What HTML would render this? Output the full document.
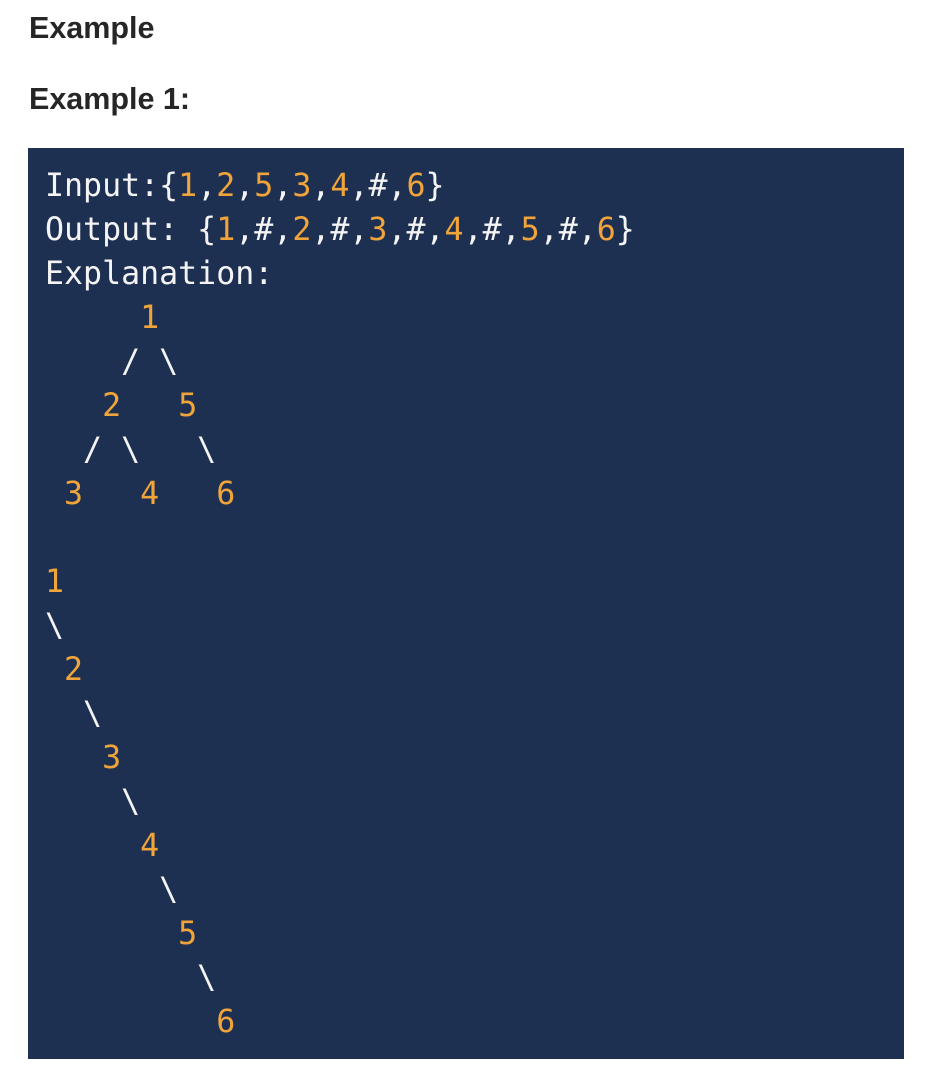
<!DOCTYPE html>
<html><head><meta charset="utf-8"><style>
html,body{margin:0;padding:0;background:#fff;width:928px;height:1082px;overflow:hidden}
h3{position:absolute;left:29px;margin:0;font:bold 30.5px/1 "Liberation Sans",sans-serif;color:#262626}
pre{position:absolute;left:28px;top:148px;width:876px;height:911px;margin:0;box-sizing:border-box;padding:16px 0 0 17px;background:#1d3052;color:#f4f4f4;font-family:"DejaVu Sans Mono","Liberation Mono",monospace;font-size:31.6px;line-height:44px;white-space:pre}
.o{color:#f0a43a}
</style></head><body>
<h3 style="top:13px">Example</h3>
<h3 style="top:84px">Example 1:</h3>
<pre>Input:{<span class="o">1</span>,<span class="o">2</span>,<span class="o">5</span>,<span class="o">3</span>,<span class="o">4</span>,#,<span class="o">6</span>}
Output: {<span class="o">1</span>,#,<span class="o">2</span>,#,<span class="o">3</span>,#,<span class="o">4</span>,#,<span class="o">5</span>,#,<span class="o">6</span>}
Explanation:
     <span class="o">1</span>
    / \
   <span class="o">2</span>   <span class="o">5</span>
  / \   \
 <span class="o">3</span>   <span class="o">4</span>   <span class="o">6</span>

<span class="o">1</span>
\
 <span class="o">2</span>
  \
   <span class="o">3</span>
    \
     <span class="o">4</span>
      \
       <span class="o">5</span>
        \
         <span class="o">6</span></pre>
</body></html>
